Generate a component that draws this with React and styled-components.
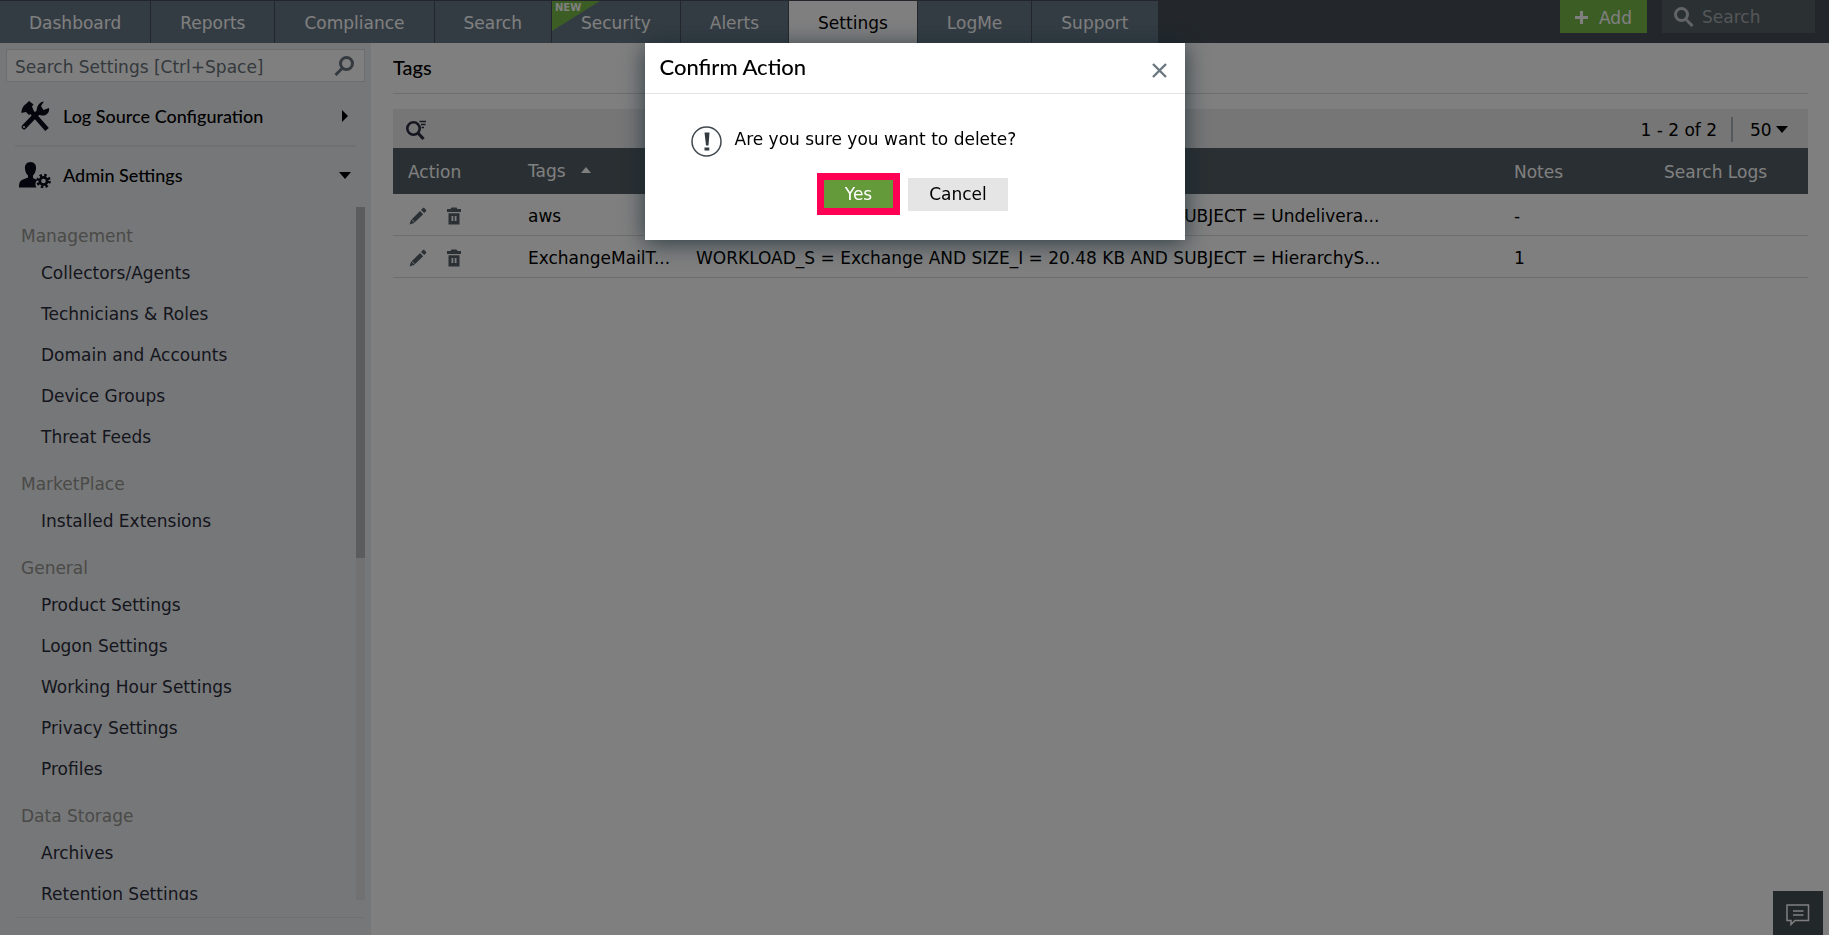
// src/App.jsx
import React, { useState } from 'react';
import styled, { createGlobalStyle } from 'styled-components';

const GlobalStyle = createGlobalStyle`
    * {
        box-sizing: border-box;
    }

    body {
        margin: 0;
        background: #ffffff;
        color: #000000;
        font-family: 'DejaVu Sans', Verdana, sans-serif;
        font-size: 17px;
        line-height: 20px;
    }

    button,
    input,
    select {
        font: inherit;
        color: inherit;
    }

    button {
        padding: 0;
        border: none;
        background: none;
        cursor: pointer;
    }
`;

const Page = styled.div`
    display: flex;
    flex-direction: column;
    height: 100vh;
    overflow: hidden;
`;

const TopBar = styled.header`
    display: flex;
    flex: none;
    justify-content: space-between;
    height: 43px;
    padding-right: 14px;
    background: #464f57;
`;

const Nav = styled.nav`
    display: flex;
    padding-top: 1px;
`;

const Tab = styled.a`
    position: relative;
    display: flex;
    align-items: center;
    padding: 2px 29px 0;
    border-right: 1px solid #464f57;
    background: ${(props) => (props.$active ? '#ffffff' : '#687987')};
    color: ${(props) => (props.$active ? '#000000' : '#ffffff')};
    text-decoration: none;
`;

const NewFlag = styled.span`
    position: absolute;
    top: 0;
    left: 0;
    width: 48px;
    height: 30px;
    padding-left: 3px;
    background: #79bd4b;
    clip-path: polygon(0 0, 100% 0, 0 100%);
    font-size: 10px;
    font-weight: bold;
    line-height: 13px;
`;

const TopActions = styled.div`
    display: flex;
    align-items: flex-start;
    gap: 15px;
`;

const AddButton = styled.button`
    display: flex;
    align-items: center;
    justify-content: center;
    gap: 11px;
    width: 87px;
    height: 33px;
    padding-top: 2px;
    background: #79bd4b;
    color: #ffffff;
`;

const TopSearch = styled.label`
    display: flex;
    align-items: center;
    gap: 8px;
    width: 153px;
    height: 33px;
    padding-left: 12px;
    background: #566067;
    color: #c3c6c9;

    input {
        width: 100%;
        min-width: 0;
        padding: 0;
        border: none;
        outline: none;
        background: none;
    }

    input::placeholder {
        color: #a9aeb2;
        opacity: 1;
    }

    svg {
        flex: none;
    }
`;

const Body = styled.div`
    display: flex;
    flex: 1;
    min-height: 0;
`;

const Sidebar = styled.aside`
    display: flex;
    flex: none;
    flex-direction: column;
    width: 371px;
    padding: 6px 6px 17px;
    background: #edeff3;
`;

const SettingsSearch = styled.label`
    display: flex;
    flex: none;
    align-items: center;
    height: 33px;
    padding: 0 10px 0 8px;
    border: 1px solid #d8dadd;
    background: #ffffff;
    color: #68747f;

    input {
        flex: 1;
        min-width: 0;
        padding: 2px 0 0;
        border: none;
        outline: none;
        background: none;
    }

    input::placeholder {
        color: #68727a;
        opacity: 1;
    }
`;

const SectionButton = styled.button`
    display: flex;
    flex: none;
    align-items: center;
    gap: 12px;
    height: ${(props) => (props.$open ? '60px' : '65px')};
    margin: 0 9px;
    padding: ${(props) => (props.$open ? '0 5px 4px 4px' : '4px 5px 0 4px')};
    border-bottom: ${(props) => (props.$open ? 'none' : '2px solid #e0e1e3')};
    font-family: Lato, sans-serif;
    font-size: 18px;
    font-weight: 500;
    text-align: left;

    span {
        flex: 1;
    }

    svg {
        flex: none;
    }
`;

const MenuArea = styled.div`
    display: flex;
    flex: 1;
    min-height: 0;
    margin-left: 9px;
    padding-bottom: 17px;
    border-bottom: 1px solid #dfe1e4;
`;

const MenuScroll = styled.div`
    flex: 1;
    min-width: 0;
    padding-top: 3px;
    overflow: hidden;
`;

const MenuGroup = styled.section`
    h3 {
        margin: 0;
        padding: 15px 6px 6px;
        color: #94948f;
        font-size: 17px;
        font-weight: normal;
        line-height: 22px;
    }

    ul {
        margin: 0;
        padding: 0 0 0 26px;
        list-style: none;
    }

    li {
        line-height: 41px;
    }

    a {
        color: #2b2c3a;
        text-decoration: none;
    }
`;

const ScrollTrack = styled.div`
    flex: none;
    width: 9px;
    background: #e2e2e4;
`;

const ScrollThumb = styled.div`
    height: 351px;
    background: #b6b8ba;
`;

const Main = styled.main`
    flex: 1;
    min-width: 0;
    padding: 0 21px 0 22px;
`;

const PageTitle = styled.h1`
    margin: 0 0 15px;
    padding: 12px 0 14px;
    border-bottom: 1px solid #dcdcdc;
    font-family: Lato, sans-serif;
    font-size: 20px;
    font-weight: 500;
    line-height: 24px;
`;

const TableBar = styled.div`
    display: flex;
    align-items: center;
    justify-content: space-between;
    height: 39px;
    padding: 2px 20px 0 12px;
    background: #ececee;

    button {
        display: flex;
    }
`;

const Pager = styled.div`
    display: flex;
    align-items: center;
    gap: 17px;

    span {
        padding: 3px 14px 2px 0;
        border-right: 2px solid #aab3b9;
    }
`;

const PageSize = styled.label`
    display: flex;
    align-items: center;
    gap: 3px;

    select {
        width: 23px;
        padding: 0;
        border: none;
        outline: none;
        background: none;
        appearance: none;
    }
`;

const Table = styled.table`
    width: 100%;
    border-collapse: separate;
    border-spacing: 0;
    table-layout: fixed;

    th {
        height: 46px;
        padding: 2px 15px 0;
        background: #555f66;
        color: #ffffff;
        font-weight: normal;
        text-align: left;
    }

    td {
        height: 42px;
        padding: 3px 15px 0;
        border-bottom: 1px solid #dadada;
        overflow: hidden;
        white-space: nowrap;
    }
`;

const Column = styled.col`
    width: ${(props) => props.$width};
`;

const SortLabel = styled.span`
    display: flex;
    align-items: center;
    gap: 14px;
    padding-bottom: 3px;
`;

const RowActions = styled.div`
    display: flex;
    gap: 19px;
    padding-left: 1px;
    color: #56616a;

    button {
        display: flex;
    }
`;

const ChatButton = styled.button`
    position: fixed;
    right: 6px;
    bottom: 0;
    display: flex;
    justify-content: center;
    align-items: center;
    width: 50px;
    height: 44px;
    padding-top: 3px;
    background: #444e55;
    color: #ffffff;
`;

const Overlay = styled.div`
    position: fixed;
    inset: 0;
    display: flex;
    align-items: flex-start;
    justify-content: center;
    padding-top: 43px;
    background: rgba(0, 0, 0, 0.5);
`;

const Dialog = styled.div`
    width: 540px;
    background: #ffffff;
    box-shadow: 0 3px 22px rgba(18, 36, 46, 0.75);
`;

const DialogHeader = styled.div`
    display: flex;
    justify-content: space-between;
    align-items: center;
    height: 51px;
    padding: 0 18px 0 15px;
    border-bottom: 1px solid #e2e4e6;

    h2 {
        margin: 0;
        padding-bottom: 3px;
        font-family: Lato, sans-serif;
        font-size: 22px;
        font-weight: 500;
        line-height: 26px;
    }

    button {
        display: flex;
        padding-top: 5px;
        color: #6b7780;
    }
`;

const DialogMessage = styled.div`
    display: flex;
    gap: 13px;
    padding: 32px 46px 0;

    p {
        margin: 0;
        padding-top: 3px;
    }
`;

const DialogButtons = styled.div`
    display: flex;
    justify-content: center;
    align-items: center;
    gap: 8px;
    padding: 16px 4px 25px 0;
`;

const ConfirmButton = styled.button`
    width: 83px;
    height: 42px;
    border: 7px solid #ff0054;
    background: #659a3a;
    color: #ffffff;
`;

const CancelButton = styled.button`
    width: 100px;
    height: 33px;
    background: #e5e5e5;
`;

const tabs = [
    { label: 'Dashboard' },
    { label: 'Reports' },
    { label: 'Compliance' },
    { label: 'Search' },
    { label: 'Security', isNew: true },
    { label: 'Alerts' },
    { label: 'Settings', active: true },
    { label: 'LogMe' },
    { label: 'Support' },
];

const menu = [
    {
        title: 'Management',
        items: [
            'Collectors/Agents',
            'Technicians & Roles',
            'Domain and Accounts',
            'Device Groups',
            'Threat Feeds',
        ],
    },
    { title: 'MarketPlace', items: ['Installed Extensions'] },
    {
        title: 'General',
        items: [
            'Product Settings',
            'Logon Settings',
            'Working Hour Settings',
            'Privacy Settings',
            'Profiles',
        ],
    },
    { title: 'Data Storage', items: ['Archives', 'Retention Settings'] },
];

const rows = [
    {
        id: 1,
        tag: 'aws',
        criteria:
            'WORKLOAD_S = Exchange AND SIZE_I = 20.48 KB AND SUBJECT = Undelivera...',
        notes: '-',
    },
    {
        id: 2,
        tag: 'ExchangeMailT...',
        criteria:
            'WORKLOAD_S = Exchange AND SIZE_I = 20.48 KB AND SUBJECT = HierarchyS...',
        notes: '1',
    },
];

const Magnifier = ({ stroke = 3, flip = false }) => (
    <svg width="20" height="20" viewBox="0 0 20 20" aria-hidden="true">
        <g
            transform={flip ? 'translate(20 0) scale(-1 1)' : undefined}
            fill="none"
            stroke="currentColor"
            strokeWidth={stroke}
        >
            <circle cx="7.5" cy="7.5" r="6" />
            <path d="M11.5 12l7 7" />
        </g>
    </svg>
);

const FilterSearchIcon = () => (
    <svg width="22" height="20" viewBox="0 0 22 20" aria-hidden="true">
        <g fill="none" stroke="#2b2c3e">
            <circle cx="8.5" cy="8.5" r="6.2" strokeWidth="2.6" />
            <path d="M12.5 12.5l6 6.5" strokeWidth="3" />
            <path d="M14.5 1.500h6.500M16 4.500h4.500M16.500 7.500h2.500" strokeWidth="1.500" />
        </g>
    </svg>
);

const ToolsIcon = () => (
    <svg width="32" height="32" viewBox="0 0 32 32" aria-hidden="true">
        <path d="M10 9l18 20.500" stroke="#0b0a1c" strokeWidth="4.800" />
        <path
            d="M2.500 13C2 9 5 5 7.500 3.500L10 1l4.500 3.500-1.500 2 2 5-5 3.500-3-3-2.500.5z"
            fill="#0b0a1c"
        />
        <path
            d="M21 10.500L5 27"
            stroke="#0b0a1c"
            strokeWidth="4.800"
            strokeLinecap="round"
        />
        <path
            d="M25 1.500L22 6l2.500 4 5.500-2c.8 4.500-2.500 8-7 7.500-4 0-6-3.500-5-7.500 1-3.500 3.500-6.500 7-6.500z"
            fill="#0b0a1c"
        />
        <circle cx="5" cy="27" r="1.100" fill="#edeff3" />
    </svg>
);

const AdminIcon = () => (
    <svg width="32" height="28" viewBox="0 0 32 28" aria-hidden="true">
        <path
            d="M11.500 1c4 0 6 3 5.500 7-.3 3-1.500 5-3 6.500v2.500l4 2c-2 2.500-2 5.500-.5 7.500H0c0-5 1-7 4-8l5-2v-2C7.300 13 6.300 11 6 8c-.5-4 1.500-7 5.500-7z"
            fill="#0b0a1c"
        />
        <g fill="none" stroke="#0b0a1c">
            <circle cx="24.5" cy="20" r="3.700" strokeWidth="2.800" />
            <circle
                cx="24.5"
                cy="20"
                r="5.900"
                strokeWidth="2.800"
                strokeDasharray="2.400 2.234"
            />
        </g>
    </svg>
);

const PencilIcon = () => (
    <svg width="18" height="18" viewBox="0 0 18 18" aria-hidden="true">
        <path
            d="M0.500 17.500l1.500-4.500L11 4l3.200 3.200L5 16zM12 3l1.700-1.700c.6-.6 1.300-.6 1.800 0l1.300 1.300c.5.500.5 1.200 0 1.800L15.200 6.100z"
            fill="currentColor"
        />
        <path d="M2.800 12.500l2.800 2.800" stroke="#ffffff" strokeWidth="0.900" />
    </svg>
);

const TrashIcon = () => (
    <svg width="16" height="18" viewBox="0 0 16 18" aria-hidden="true">
        <path
            fillRule="evenodd"
            fill="currentColor"
            d="M1 2h3.500l1-1.500h5L11.500 2H15v3H1zM2.500 6.200h11v11.300h-11zM5.500 9v5h1.800V9zM8.700 9v5h1.800V9z"
        />
    </svg>
);

const CaretIcon = ({ direction = 'down', color = '#000000' }) => {
    const points = {
        down: '0,3 12,3 6,10',
        up: '1,9 11,9 6,3',
        right: '3,1 9,7 3,13',
    };

    return (
        <svg width="12" height="13" viewBox="0 0 12 13" aria-hidden="true">
            <polygon points={points[direction]} fill={color} />
        </svg>
    );
};

const ChatIcon = () => (
    <svg width="24" height="22" viewBox="0 0 24 22" aria-hidden="true">
        <path
            d="M1 1h21.500v15.500H9L5 20.500v-4H1z M7 7h10.500 M7 11h10.500"
            fill="none"
            stroke="currentColor"
            strokeWidth="1.500"
        />
    </svg>
);

const WarningIcon = () => (
    <svg width="31" height="31" viewBox="0 0 31 31" aria-hidden="true">
        <circle
            cx="15.5"
            cy="15.5"
            r="14.5"
            fill="none"
            stroke="#3f484e"
            strokeWidth="1.500"
        />
        <path
            d="M13.500 6.500h5l-1 13h-2.500zM13.500 21.500h4.800v3h-4.800z"
            fill="#333b40"
        />
    </svg>
);

const App = () => {
    const [dialogOpen, setDialogOpen] = useState(true);
    const closeDialog = () => setDialogOpen(false);

    return (
        <Page>
            <GlobalStyle />
            <TopBar>
                <Nav>
                    {tabs.map((tab) => (
                        <Tab key={tab.label} href="#" $active={tab.active}>
                            {tab.isNew && <NewFlag>NEW</NewFlag>}
                            {tab.label}
                        </Tab>
                    ))}
                </Nav>
                <TopActions>
                    <AddButton>
                        <svg width="13" height="13" viewBox="0 0 13 13" aria-hidden="true">
                            <path
                                d="M6.500 0v13M0 6.500h13"
                                stroke="#ffffff"
                                strokeWidth="3"
                            />
                        </svg>
                        Add
                    </AddButton>
                    <TopSearch>
                        <Magnifier />
                        <input placeholder="Search" aria-label="Search" />
                    </TopSearch>
                </TopActions>
            </TopBar>

            <Body>
                <Sidebar>
                    <SettingsSearch>
                        <input
                            placeholder="Search Settings [Ctrl+Space]"
                            aria-label="Search Settings"
                        />
                        <Magnifier flip />
                    </SettingsSearch>
                    <SectionButton>
                        <ToolsIcon />
                        <span>Log Source Configuration</span>
                        <CaretIcon direction="right" />
                    </SectionButton>
                    <SectionButton $open>
                        <AdminIcon />
                        <span>Admin Settings</span>
                        <CaretIcon />
                    </SectionButton>
                    <MenuArea>
                        <MenuScroll>
                            {menu.map((group) => (
                                <MenuGroup key={group.title}>
                                    <h3>{group.title}</h3>
                                    <ul>
                                        {group.items.map((item) => (
                                            <li key={item}>
                                                <a href="#">{item}</a>
                                            </li>
                                        ))}
                                    </ul>
                                </MenuGroup>
                            ))}
                        </MenuScroll>
                        <ScrollTrack>
                            <ScrollThumb />
                        </ScrollTrack>
                    </MenuArea>
                </Sidebar>

                <Main>
                    <PageTitle>Tags</PageTitle>
                    <TableBar>
                        <button aria-label="Filter">
                            <FilterSearchIcon />
                        </button>
                        <Pager>
                            <span>1 - 2 of 2</span>
                            <PageSize>
                                <select aria-label="Rows per page">
                                    <option>50</option>
                                </select>
                                <CaretIcon />
                            </PageSize>
                        </Pager>
                    </TableBar>
                    <Table>
                        <colgroup>
                            <Column $width="120px" />
                            <Column $width="168px" />
                            <Column />
                            <Column $width="150px" />
                            <Column $width="159px" />
                        </colgroup>
                        <thead>
                            <tr>
                                <th>Action</th>
                                <th>
                                    <SortLabel>
                                        Tags
                                        <CaretIcon direction="up" color="#ffffff" />
                                    </SortLabel>
                                </th>
                                <th>Criteria</th>
                                <th>Notes</th>
                                <th>Search Logs</th>
                            </tr>
                        </thead>
                        <tbody>
                            {rows.map((row) => (
                                <tr key={row.id}>
                                    <td>
                                        <RowActions>
                                            <button aria-label="Edit">
                                                <PencilIcon />
                                            </button>
                                            <button
                                                aria-label="Delete"
                                                onClick={() => setDialogOpen(true)}
                                            >
                                                <TrashIcon />
                                            </button>
                                        </RowActions>
                                    </td>
                                    <td>{row.tag}</td>
                                    <td>{row.criteria}</td>
                                    <td>{row.notes}</td>
                                    <td />
                                </tr>
                            ))}
                        </tbody>
                    </Table>
                </Main>
            </Body>

            <ChatButton aria-label="Chat">
                <ChatIcon />
            </ChatButton>

            {dialogOpen && (
                <Overlay>
                    <Dialog role="dialog" aria-labelledby="confirm-title">
                        <DialogHeader>
                            <h2 id="confirm-title">Confirm Action</h2>
                            <button aria-label="Close" onClick={closeDialog}>
                                <svg width="15" height="15" viewBox="0 0 15 15">
                                    <path
                                        d="M1 1l13 13M14 1L1 14"
                                        stroke="currentColor"
                                        strokeWidth="2.400"
                                    />
                                </svg>
                            </button>
                        </DialogHeader>
                        <DialogMessage>
                            <WarningIcon />
                            <p>Are you sure you want to delete?</p>
                        </DialogMessage>
                        <DialogButtons>
                            <ConfirmButton onClick={closeDialog}>Yes</ConfirmButton>
                            <CancelButton onClick={closeDialog}>Cancel</CancelButton>
                        </DialogButtons>
                    </Dialog>
                </Overlay>
            )}
        </Page>
    );
};

export default App;
